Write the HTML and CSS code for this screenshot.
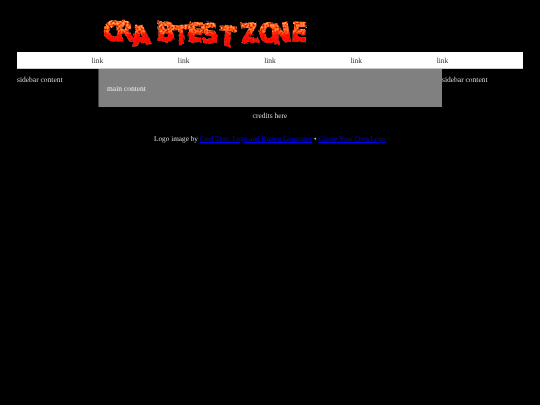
FILE: index.html
```html
<!DOCTYPE html>
<html lang="en">
<head>
<meta charset="utf-8">
<title>Crabtest Zone</title>
<link rel="stylesheet" href="styles.css">
</head>
<body>
<header class="masthead">
  <svg class="logo" width="206" height="40" viewBox="0 0 206 40" role="img" aria-label="Crabtest Zone">
    <defs>
      <linearGradient id="fire" gradientUnits="userSpaceOnUse" x1="0" y1="10" x2="0" y2="34">
        <stop offset="0" stop-color="#ffc050"/>
        <stop offset="0.5" stop-color="#ff9030"/>
        <stop offset="0.66" stop-color="#ff1a08"/>
        <stop offset="1" stop-color="#ff1000"/>
      </linearGradient>
      <filter id="rough" x="-5%" y="-20%" width="110%" height="140%" color-interpolation-filters="sRGB">
        <feTurbulence type="fractalNoise" baseFrequency="0.14" numOctaves="2" seed="4" result="n"/>
        <feDisplacementMap in="SourceGraphic" in2="n" scale="3.5" result="shape"/>
        <feTurbulence type="fractalNoise" baseFrequency="0.5" numOctaves="1" seed="9"/>
        <feColorMatrix type="matrix" values="0 0 0 0 1  3 0 0 0 -0.9  3 0 0 0 -1  0 0 0 0 1" result="speck"/>
        <feBlend in="shape" in2="speck" mode="multiply" result="mix"/>
        <feComposite in="mix" in2="shape" operator="in"/>
      </filter>
    </defs>
    <text class="logo-text" fill="url(#fire)" stroke="url(#fire)" filter="url(#rough)" x="1 13 30 54 71 84 99 116 130 139 156 170 188" y="32 32 37 32 36 32 34 36 36 34 33 35 32" rotate="-4 -4 -8 0 -4 4 -4 4 0 -6 0 -10 2">CRABTEST ZONE</text>
  </svg>
</header>
<nav class="nav">
  <a class="nav-link">link</a>
  <a class="nav-link">link</a>
  <a class="nav-link">link</a>
  <a class="nav-link">link</a>
  <a class="nav-link">link</a>
</nav>
<div class="columns">
  <aside class="sidebar">sidebar content</aside>
  <main class="content">main content</main>
  <aside class="sidebar">sidebar content</aside>
</div>
<p class="credits">credits here</p>
<p class="attribution">Logo image by <a href="#">Cool Text: Logo and Button Generator</a> • <a href="#">Create Your Own Logo</a></p>
</body>
</html>
```

FILE: styles.css
```css
html {
  margin: 0;
  background: #000;
}
body {
  margin: 0;
  padding: 0 17px;
  color: #ddd;
  font: 7.5px/10px "Liberation Serif", "Times New Roman", serif;
  text-rendering: geometricPrecision;
  will-change: opacity;
}
.masthead {
  height: 52px;
  display: flex;
  align-items: flex-end;
  padding-left: 86px;
  box-sizing: border-box;
}
.logo {
  display: block;
  margin-bottom: 3px;
  overflow: visible;
}
.logo-text {
  font: 700 26px "DejaVu Sans", sans-serif;
  font-stretch: condensed;
  stroke-width: 1.4px;
}
.nav {
  display: flex;
  justify-content: space-evenly;
  background: #fff;
  height: 16px;
  line-height: 17px;
  border-bottom: 1px solid #ccc;
  color: #333;
}
.columns {
  display: grid;
  grid-template-columns: 81px 344px 1fr;
}
.sidebar {
  padding-top: 6px;
}
.content {
  height: 38px;
  box-sizing: border-box;
  padding: 15px 8px;
  background: #808080;
  color: #eee;
  border-left: 1px solid #444;
}
.credits {
  margin: 4px 0 0;
  text-align: center;
}
.attribution {
  margin: 13px 0 0;
  text-align: center;
  font-size: 7.25px;
}
.attribution a {
  color: #00e;
  text-decoration: underline;
}
```
